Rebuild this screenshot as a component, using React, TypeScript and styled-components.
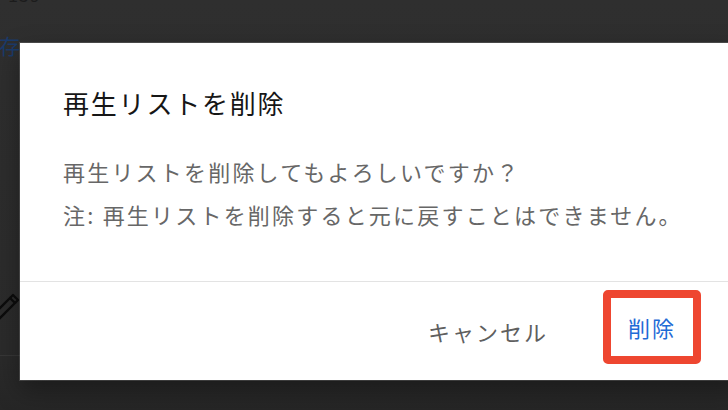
import React from 'react';
import styled, { createGlobalStyle } from 'styled-components';

const GlobalStyle = createGlobalStyle`
  html, body {
    margin: 0;
    padding: 0;
    background: #2d2d2d;
  }
  * {
    box-sizing: border-box;
  }
`;

export default function App() {
  return (
    <>
      <GlobalStyle />
      <Screen>
        {/* 暗くなった背面のページ */}
        <Behind>
          <Count>159</Count>
          <SaveLink>保存</SaveLink>
          <EditRow>
            <PencilIcon />
          </EditRow>
        </Behind>

        {/* 削除確認ダイアログ */}
        <Dialog role="dialog" aria-labelledby="dlg-title">
          <Content>
            <Title id="dlg-title">再生リストを削除</Title>
            <Message>
              <p>再生リストを削除してもよろしいですか？</p>
              <p>注: 再生リストを削除すると元に戻すことはできません。</p>
            </Message>
          </Content>
          <Footer>
            <TextButton>キャンセル</TextButton>
            <TextButton $primary $highlight>
              削除
            </TextButton>
          </Footer>
        </Dialog>
      </Screen>
    </>
  );
}

function PencilIcon() {
  return (
    <svg width="34" height="34" viewBox="0 0 34 34" fill="none">
      <g stroke="#0c0c0c" strokeWidth="2.4" strokeLinejoin="round">
        <path d="M2 30 L24 8 L29 13 L7 35" />
        <path d="M24 8 L27 5 L32 10 L29 13" />
      </g>
    </svg>
  );
}

const Screen = styled.div`
  position: relative;
  width: 100vw;
  height: 410px;
  overflow: hidden;
  background: linear-gradient(#2f2f2f 0%, #2b2b2b 85%, #262626 100%);
  font-family: 'Noto Sans CJK JP', 'Noto Sans', sans-serif;
`;

/** 背面ページの左端 */
const Behind = styled.div`
  width: 80px;
  height: 100%;
  margin-left: -22px;
  display: flex;
  flex-direction: column;
  white-space: nowrap;
`;

const Count = styled.div`
  margin-top: -16px;
  padding-left: 30px;
  height: 20px;
  font-size: 18px;
  line-height: 20px;
  color: #1c1c1c;
  letter-spacing: 1px;
`;

const SaveLink = styled.div`
  margin-top: 27px;
  font-size: 21px;
  line-height: 28px;
  color: #1b3a6a;
`;

const EditRow = styled.div`
  margin-top: 231px;
  height: 66px;
  border-bottom: 1px solid #373737;
  padding-left: 8px;
`;

/** 確認ダイアログ */
const Dialog = styled.div`
  position: absolute;
  top: 43px;
  left: 20px;
  right: -12px;
  height: 337px;
  background: #fff;
  display: flex;
  flex-direction: column;
  box-shadow: 0 0 0 1px rgba(255, 255, 255, 0.14), 0 10px 24px rgba(0, 0, 0, 0.35);
`;

const Content = styled.div`
  padding: 42px 40px 45px 43px;
  border-bottom: 1px solid #e3e3e3;
`;

const Title = styled.h2`
  margin: 0 0 29px;
  font-size: 26px;
  line-height: 36px;
  font-weight: 400;
  letter-spacing: 1.8px;
  color: #161616;
`;

const Message = styled.div`
  font-size: 22px;
  line-height: 43px;
  letter-spacing: 2.2px;
  color: #676767;

  p {
    margin: 0;
  }
`;

const Footer = styled.div`
  flex: 1;
  display: flex;
  justify-content: flex-end;
  align-items: center;
  gap: 39px;
  padding: 0 39px 0 0;
`;

const TextButton = styled.button<{ $primary?: boolean; $highlight?: boolean }>`
  border: ${p => (p.$highlight ? '8px solid #ee4630' : 'none')};
  border-radius: ${p => (p.$highlight ? '5px' : '0')};
  background: none;
  height: ${p => (p.$highlight ? '74px' : '60px')};
  margin-bottom: ${p => (p.$highlight ? '9px' : '0')};
  padding: 0 ${p => (p.$highlight ? '17px' : '16px')};
  font-family: inherit;
  font-size: 22px;
  letter-spacing: 2px;
  color: ${p => (p.$primary ? '#1f6bd6' : '#5f5f5f')};
  cursor: pointer;
`;
